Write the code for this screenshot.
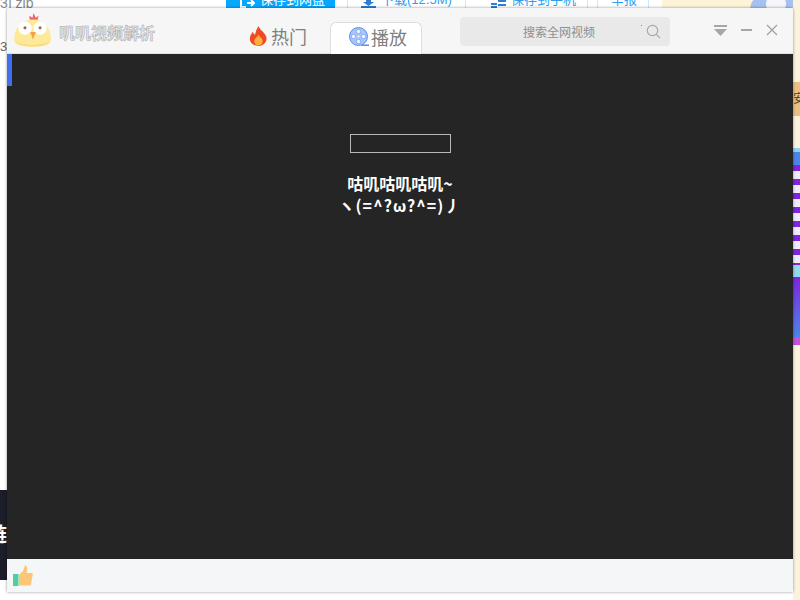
<script>
  const tabs = ['热门', '播放'];
</script>

<div class="desktop">
  <div class="behind-top">
    <span class="zip">3] zip</span>
    <span class="blue-btn">
      <svg class="btn-icon" width="15" height="8" viewBox="0 0 15 8" fill="none" stroke="#fff" stroke-width="2"><path d="M1 0 V7 H6 M7 3 H14 M11 0 L14 3 L11 6"/></svg>
      保存到网盘
    </span>
    <span class="ico dl-ico"><svg width="15" height="8" viewBox="0 0 15 8"><path d="M5 0 H10 V2 H13 L7.500 6 L2 2 H5 Z M0 6 H15 V8 H0 Z" fill="#2f7fd0"/></svg></span>
    <span class="link dl">下载(12.5M)</span>
    <span class="rule r1"></span>
    <span class="rule r2"></span>
    <span class="ico ph-ico"><svg width="15" height="8" viewBox="0 0 15 8"><path d="M7 0 H15 V2 H7 Z M0 3 H6 V5 H0 Z M7 4 H15 V6 H7 Z M0 6 H6 V8 H0 Z" fill="#2f7fd0"/></svg></span>
    <span class="link ph">保存到手机</span>
    <span class="rule r3"></span>
    <span class="rule r4"></span>
    <span class="link rp">举报</span>
    <span class="rule r5"></span>
    <span class="cream"></span>
    <span class="peri"></span>
    <span class="moon"></span>
  </div>
  <span class="num3">3</span>
  <div class="side">
    <span class="s1">安</span>
    <span class="s2"></span>
    <span class="s3"></span>
    <span class="s4"></span>
    <span class="s5"></span>
  </div>
  <div class="black-left">链</div>

  <main class="window">
    <header class="titlebar">
      <div class="brand">
        <svg class="logo" width="40" height="34" viewBox="0 0 42 36">
          <path d="M18 10 L17 3 L20.500 5 L21.500 0 L24 5 L27 3 L25 10 Z" fill="#f0626e"/>
          <path d="M1 28 C1 15 10 7 21 7 C32 7 40 15 40 28 C40 35 30 35.500 21 35.500 C11 35.500 1 35 1 28 Z" fill="#fee999"/>
          <path d="M3 30 C10 35 31 35 38.500 30 C36 35 28 35.500 21 35.500 C13 35.500 6 35 3 30 Z" fill="#fcdc7a"/>
          <circle cx="12.500" cy="16" r="7" fill="#fff"/>
          <circle cx="28.500" cy="16" r="7" fill="#fff"/>
          <circle cx="12.500" cy="15.500" r="1.600" fill="#8a6a50"/>
          <circle cx="28.500" cy="15.500" r="1.600" fill="#8a6a50"/>
          <path d="M18 20 L24 20 L21 28 Z" fill="#f3a04b"/>
        </svg>
        <span class="brand-name">叽叽视频解析</span>
      </div>
      <nav class="tabs">
        <button class="tab hot">
          <svg width="19" height="20" viewBox="0 0 20 21">
            <path d="M10 0 C11 4 16 6 18 11 C20 16 15 21 10 21 C5 21 0 17 1 12 C1.500 9 3 8 4 6 C5 8 5.500 9 6.500 9 C7 6 8 3 10 0 Z" fill="#ef4a23"/>
            <path d="M10 9 C11 12 14.500 13 14.500 16 C14.500 19 12 20.500 10 20.500 C7.500 20.500 5.500 18.500 5.500 16 C5.500 13.500 8.500 12 10 9 Z" fill="#fbb040"/>
          </svg>
          <span>{tabs[0]}</span>
        </button>
        <button class="tab active">
          <svg width="20" height="20" viewBox="0 0 20 20">
            <circle cx="9.500" cy="9.500" r="9" fill="#a9c5f8" stroke="#5b8bee" stroke-width="1"/>
            <path d="M13 17.500 L20 17.500 L20 19 L12 19 Z" fill="#5b8bee"/>
            <circle cx="9.500" cy="4.500" r="2.200" fill="#f2f6fe" stroke="#5b8bee" stroke-width=".6"/>
            <circle cx="9.500" cy="14.500" r="2.200" fill="#f2f6fe" stroke="#5b8bee" stroke-width=".6"/>
            <circle cx="4.500" cy="9.500" r="2.200" fill="#f2f6fe" stroke="#5b8bee" stroke-width=".6"/>
            <circle cx="14.500" cy="9.500" r="2.200" fill="#f2f6fe" stroke="#5b8bee" stroke-width=".6"/>
            <circle cx="9.500" cy="9.500" r="1" fill="#f2f6fe"/>
          </svg>
          <span>{tabs[1]}</span>
        </button>
      </nav>
      <div class="search">
        <span class="placeholder">搜索全网视频</span>
        <i class="speck"></i>
        <svg width="15" height="15" viewBox="0 0 15 15" fill="none" stroke="#a8a8a8" stroke-width="1.200">
          <circle cx="6.500" cy="6.500" r="5.200"/>
          <path d="M10.300 10.300 L14 14"/>
        </svg>
      </div>
      <div class="controls">
        <svg width="13" height="11" viewBox="0 0 13 11" fill="#a6a6a6">
          <rect x="0" y="0" width="13" height="2"/>
          <path d="M0 4 L13 4 L6.500 11 Z"/>
        </svg>
        <svg width="11" height="2" viewBox="0 0 11 2" fill="#a6a6a6"><rect width="11" height="2"/></svg>
        <svg width="12" height="12" viewBox="0 0 12 12" stroke="#a0a0a0" stroke-width="1.200"><path d="M1 1 L11 11 M11 1 L1 11"/></svg>
      </div>
    </header>

    <section class="player">
      <div class="marker"></div>
      <div class="loadbox"></div>
      <p class="msg">咕叽咕叽咕叽~<br/><span class="face">ヽ(=^?ω?^=)丿</span></p>
    </section>

    <footer class="footer">
      <svg width="20" height="21" viewBox="0 0 20 21">
        <rect x="0" y="9" width="5.500" height="12" fill="#4fce9e"/>
        <path d="M6 10 L10 6 L12 0.500 C14 0.500 14.500 3 14 5 L13.500 8 L19 8 C20 8 20 10 19.500 11 L18 19 C18 20 17 20.500 16 20.500 L6 20.500 Z" fill="#fdc677"/>
      </svg>
    </footer>
  </main>
</div>

<style>
  :global(body) { margin: 0; background: #fff; }
  .desktop {
    position: relative;
    width: 800px;
    height: 600px;
    overflow: hidden;
    background: #fff;
    font-family: "Liberation Sans", "Noto Sans CJK SC", sans-serif;
  }
  .behind-top { position: absolute; inset: 0 0 auto 0; height: 8px; overflow: hidden; }
  .behind-top > span { position: absolute; white-space: nowrap; }
  .zip { left: 0; top: -5px; font-size: 14px; color: #888; }
  .blue-btn {
    left: 226px; top: -8px; width: 109px; height: 16px; background: #06a7ff; color: #fff;
    font-size: 13px; line-height: 16px; padding-left: 34px; box-sizing: border-box;
  }
  .btn-icon { position: absolute; left: 14px; top: 8px; }
  .ico { top: 0; line-height: 0; }
  .dl-ico { left: 361px; }
  .ph-ico { left: 491px; }
  .link { color: #2d9ff0; font-size: 13px; top: -8px; line-height: 16px; }
  .dl { left: 381px; }
  .ph { left: 511px; }
  .rp { left: 611px; }
  .rule { top: 0; width: 1px; height: 8px; background: #cfe6f8; }
  .r1 { left: 347px; }
  .r2 { left: 465px; }
  .r3 { left: 587px; }
  .r4 { left: 597px; }
  .r5 { left: 648px; }
  .cream { left: 662px; top: 0; width: 138px; height: 8px; background: #fdf4d8; }
  .peri { left: 750px; top: -10px; width: 50px; height: 40px; border-radius: 50%; background: #a6c0f0; }
  .moon { left: 766px; top: -6px; width: 20px; height: 20px; border-radius: 50%; background: #f4f6fb; }
  .num3 { position: absolute; left: 0; top: 39px; font-size: 13px; color: #666; width: 7px; overflow: hidden; }
  .side { position: absolute; left: 793px; top: 0; width: 7px; height: 600px; background: #fbf3dc; overflow: hidden; }
  .side span { position: absolute; left: 0; width: 7px; display: block; }
  .s1 { top: 82px; height: 34px; background: #e9c283; font-size: 12px; line-height: 34px; color: #5c3a1a; }
  .s2 { top: 148px; height: 17px; background: linear-gradient(#8ed4ee 0 4px, #4a86ea 4px); }
  .s3 { top: 165px; height: 100px; background: repeating-linear-gradient(#8124e0 0 6px, #f1ebfb 6px 14px); }
  .s4 { top: 265px; height: 12px; background: #8fdcec; }
  .s5 { top: 277px; height: 68px; background: linear-gradient(#7e24e4, #4a86ea 88%, #c84fe0 88%); }
  .black-left {
    position: absolute; left: 0; top: 490px; width: 7px; height: 90px;
    background: #1b1e28; color: #fff; font-size: 20px; line-height: 90px; overflow: hidden;
    text-indent: -13px; font-weight: 700;
  }

  .window {
    position: absolute;
    left: 7px; top: 8px;
    width: 786px; height: 584px;
    display: flex;
    flex-direction: column;
    box-shadow: 0 0 3px rgba(0, 0, 0, .45);
    border-radius: 3px 3px 0 0;
    overflow: hidden;
  }
  .titlebar {
    height: 46px;
    flex: none;
    box-sizing: border-box;
    background: #f6f6f6;
    border-bottom: 1px solid #e0e0e0;
    display: flex;
    align-items: flex-start;
    position: relative;
  }
  .brand { display: flex; align-items: center; gap: 5px; margin: 5px 0 0 6px; width: 221px; flex: none; }
  .logo { flex: none; }
  .brand-name {
    font-size: 16px; font-weight: 700; color: #e6e6e6;
    -webkit-text-stroke: 0.5px #a8a8a8;
    margin-top: 4px;
    margin-left: 1px;
  }
  .tabs { display: flex; align-items: flex-end; height: 45px; flex: none; }
  .tab {
    display: flex; align-items: center; border: 0; background: none; padding: 0 0 3px; margin: 0;
    font: inherit; font-size: 18px; color: #808080; height: 31px;
    box-sizing: border-box;
  }
  .tab.hot { width: 96px; padding-left: 15px; gap: 3px; }
  .tab.active {
    width: 92px; padding-left: 18px; gap: 2px; background: #fff;
    border: 1px solid #ddd; border-bottom: 0; border-radius: 6px 6px 0 0;
    margin-bottom: -1px; height: 32px; position: relative;
  }
  .search {
    margin: 9px 0 0 38px; width: 210px; height: 29px; flex: none;
    background: #e9e9e9; border-radius: 4px;
    display: flex; align-items: center; justify-content: flex-end; gap: 0; padding-right: 9px;
    box-sizing: border-box; position: relative;
  }
  .speck { position: absolute; left: 181px; top: 8px; width: 1px; height: 1px; background: #888; }
  .placeholder { font-size: 12px; color: #8e8e8e; margin-right: 51px; }
  .controls { display: flex; align-items: center; gap: 14px; margin: 16px 0 0 44px; }
  .controls svg { display: block; }

  .player { flex: 1; background: #252525; position: relative; display: flex; flex-direction: column; align-items: center; }
  .marker { position: absolute; left: 0; top: 0; width: 5px; height: 32px; background: #3f6ff0; }
  .loadbox { width: 99px; height: 17px; border: 1px solid #b9b9b9; margin-top: 80px; flex: none; }
  .msg {
    margin: 19px 0 0; text-align: center; color: #fff; font-size: 16px; font-weight: 700;
    line-height: 22px; font-family: "Noto Sans CJK SC", sans-serif;
  }
  .face { letter-spacing: 1.1px; }
  .footer {
    height: 33px; flex: none; background: #f5f6f8; display: flex; align-items: center;
    padding-left: 6px; box-sizing: border-box;
  }
</style>
